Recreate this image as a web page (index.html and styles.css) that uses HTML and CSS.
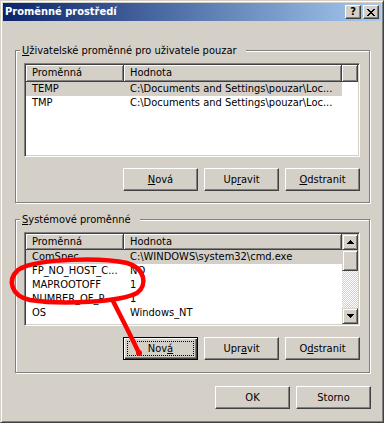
FILE: index.html
```html
<!DOCTYPE html>
<html lang="cs">
<head>
<meta charset="utf-8">
<title>Proměnné prostředí</title>
<link rel="stylesheet" href="styles.css">
</head>
<body>
<div class="window">
  <div class="titlebar">
    <span class="title">Proměnné prostředí</span>
    <div class="title-buttons">
      <span class="tbtn help">?</span>
      <span class="tbtn close"><svg width="8" height="7" viewBox="0 0 8 7"><path d="M0 0h2v1h1v1h2V1h1V0h2v1H7v1H6v1H5v1h1v1h1v1h1v1H6V6H5V5H3v1H2v1H0V6h1V5h1V4h1V3H2V2H1V1H0z" fill="#000"/></svg></span>
    </div>
  </div>
  <div class="content">
    <fieldset class="group g1">
      <legend><u>U</u>živatelské proměnné pro uživatele pouzar</legend>
      <div class="listview">
        <div class="lv-main">
          <div class="lv-header">
            <span class="hcol c1">Proměnná</span>
            <span class="hcol c2">Hodnota</span>
            <span class="hcol filler"></span>
          </div>
          <div class="row selected"><span class="cell c1">TEMP</span><span class="cell c2">C:\Documents and Settings\pouzar\Loc...</span></div>
          <div class="row"><span class="cell c1">TMP</span><span class="cell c2">C:\Documents and Settings\pouzar\Loc...</span></div>
        </div>
      </div>
      <div class="btnrow">
        <button class="btn"><u>N</u>ová</button>
        <button class="btn">Up<u>r</u>avit</button>
        <button class="btn"><u>O</u>dstranit</button>
      </div>
    </fieldset>

    <fieldset class="group g2">
      <legend><u>S</u>ystémové proměnné</legend>
      <div class="listview scroll">
        <div class="lv-main">
          <div class="lv-header">
            <span class="hcol c1">Proměnná</span>
            <span class="hcol c2">Hodnota</span>
          </div>
          <div class="row selected"><span class="cell c1">ComSpec</span><span class="cell c2">C:\WINDOWS\system32\cmd.exe</span></div>
          <div class="row"><span class="cell c1">FP_NO_HOST_C...</span><span class="cell c2">NO</span></div>
          <div class="row"><span class="cell c1">MAPROOTOFF</span><span class="cell c2">1</span></div>
          <div class="row"><span class="cell c1">NUMBER_OF_P...</span><span class="cell c2">1</span></div>
          <div class="row"><span class="cell c1">OS</span><span class="cell c2">Windows_NT</span></div>
          <div class="row partial"><span class="cell c1">Path</span><span class="cell c2">C:\WINDOWS\system32;C:\WINDOWS;C:\...</span></div>
        </div>
        <div class="scrollbar">
          <span class="sb-btn"><svg width="7" height="4" viewBox="0 0 7 4"><path d="M3 0h1v1h1v1h1v1h1v1H0V3h1V2h1V1h1z" fill="#000"/></svg></span>
          <span class="sb-thumb"></span>
          <span class="sb-track"></span>
          <span class="sb-btn"><svg width="7" height="4" viewBox="0 0 7 4"><path d="M0 0h7v1H6v1H5v1H4v1H3V3H2V2H1V1H0z" fill="#000"/></svg></span>
        </div>
      </div>
      <div class="btnrow">
        <button class="btn default">Nov<u>á</u></button>
        <button class="btn">Upr<u>a</u>vit</button>
        <button class="btn">O<u>d</u>stranit</button>
      </div>
    </fieldset>

    <div class="dlg-buttons">
      <button class="btn">OK</button>
      <button class="btn">Storno</button>
    </div>
  </div>

  <svg class="annotation" width="384" height="423" viewBox="0 0 384 423">
    <path d="M22 268 C40 259 100 257 127 263 C145 268 148 285 137 293 C120 302 62 305 30 300 C11 296 7 280 18 270 C24 266 32 264 40 263" fill="none" stroke="#ff0000" stroke-width="4.5" stroke-linecap="round" stroke-linejoin="round"/>
    <path d="M113 301 C119 313 128 330 139 353" fill="none" stroke="#ff0000" stroke-width="4.5" stroke-linecap="round"/>
    <circle cx="139" cy="353" r="3" fill="#ff0000"/>
  </svg>
</div>
</body>
</html>
```

FILE: styles.css
```css
* {
  box-sizing: border-box;
}

body {
  margin: 0;
  font-family: "DejaVu Sans Condensed", "DejaVu Sans", sans-serif;
  font-size: 11px;
  color: #000;
  background: #d4d0c8;
}

.window {
  position: relative;
  width: 384px;
  height: 423px;
  background: #d4d0c8;
  border: 1px solid;
  border-color: #d4d0c8 #404040 #404040 #d4d0c8;
  box-shadow: inset 1px 1px #fff, inset -1px -1px #808080;
  padding: 2px;
  display: flex;
  flex-direction: column;
}

.titlebar {
  height: 18px;
  flex: none;
  background: linear-gradient(to right, #0a246a, #a6caf0);
  display: flex;
  align-items: center;
  justify-content: space-between;
  padding: 0 2px;
  color: #fff;
  font-weight: bold;
}

.title {
  line-height: 18px;
}

.title-buttons {
  display: flex;
  gap: 2px;
}

.tbtn {
  width: 16px;
  height: 14px;
  background: #d4d0c8;
  border: 1px solid;
  border-color: #fff #404040 #404040 #fff;
  box-shadow: inset -1px -1px #808080;
  display: flex;
  align-items: center;
  justify-content: center;
  color: #000;
  font-size: 11px;
  line-height: 12px;
}

.tbtn svg {
  display: block;
}

.content {
  padding: 23px 10px 0 12px;
}

.group {
  margin: 0;
  width: 355px;
  min-width: 0;
  border: 1px solid #808080;
  box-shadow: 1px 1px #fff, inset 1px 1px #fff;
  padding: 6px 9px 11px 8px;
}

.g2 {
  margin-top: 10px;
  padding-bottom: 12px;
}

.group legend {
  padding: 0 9px 0 2px;
  margin-left: -4px;
  line-height: 13px;
  background: #d4d0c8;
}

.listview {
  width: 336px;
  height: 94px;
  background: #fff;
  border: 1px solid;
  border-color: #808080 #fff #fff #808080;
  box-shadow: inset 1px 1px #404040, inset -1px -1px #d4d0c8;
  padding: 1px;
  display: flex;
  overflow: hidden;
}

.lv-main {
  flex: 1;
  min-width: 0;
  overflow: hidden;
  background: #fff;
}

.lv-header {
  display: flex;
  height: 17px;
}

.scroll .lv-header {
  height: 16px;
}

.hcol {
  flex: none;
  height: 100%;
  background: #d4d0c8;
  border-style: solid;
  border-width: 0 1px 1px 0;
  border-color: #404040;
  box-shadow: inset 1px 1px #fff, inset -1px -1px #808080;
  padding-left: 6px;
  line-height: 15px;
  white-space: nowrap;
}

.c1 {
  width: 98px;
}

.c2 {
  width: 218px;
}

.hcol.filler {
  flex: 1;
}

.row {
  display: flex;
  width: 316px;
  height: 14px;
  line-height: 14px;
}

.row.selected {
  background: #d4d0c8;
}

.row.partial {
  height: 18px;
  padding-top: 4px;
}

.cell {
  flex: none;
  padding-left: 6px;
  white-space: nowrap;
  overflow: hidden;
}

.scrollbar {
  width: 16px;
  flex: none;
  display: flex;
  flex-direction: column;
}

.sb-btn,
.sb-thumb {
  flex: none;
  background: #d4d0c8;
  border: 1px solid;
  border-color: #d4d0c8 #404040 #404040 #d4d0c8;
  box-shadow: inset 1px 1px #fff, inset -1px -1px #808080;
}

.sb-btn {
  height: 16px;
  display: flex;
  align-items: center;
  justify-content: center;
}

.sb-btn svg {
  display: block;
}

.sb-thumb {
  height: 21px;
}

.sb-track {
  flex: 1;
  background-image: conic-gradient(#fff 25%, #d4d0c8 0 50%, #fff 0 75%, #d4d0c8 0);
  background-size: 2px 2px;
}

.btnrow,
.dlg-buttons {
  display: flex;
  justify-content: flex-end;
  gap: 6px;
}

.btnrow {
  margin-top: 11px;
}

.dlg-buttons {
  width: 356px;
  margin-top: 13px;
}

.btn {
  position: relative;
  width: 75px;
  height: 23px;
  margin: 0;
  padding: 0;
  font: inherit;
  color: #000;
  background: #d4d0c8;
  border: 1px solid;
  border-color: #fff #404040 #404040 #fff;
  box-shadow: inset -1px -1px #808080;
  line-height: 20px;
  text-align: center;
}

.btn.default {
  border-color: #000;
  box-shadow: inset 1px 1px #fff, inset -1px -1px #404040, inset -2px -2px #808080;
}

.btn.default::after {
  content: "";
  position: absolute;
  left: 3px;
  top: 3px;
  right: 3px;
  bottom: 3px;
  border: 1px dotted #000;
}

.annotation {
  position: absolute;
  left: -1px;
  top: -1px;
  pointer-events: none;
}
```
